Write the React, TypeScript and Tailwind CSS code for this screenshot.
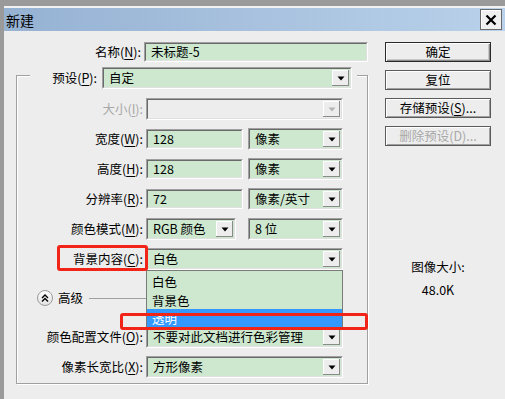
const font = "font-['Noto_Sans_CJK_SC',sans-serif]";

function Arrow({ disabled }: { disabled?: boolean }) {
  return (
    <div className="w-[17px] my-[1px] mr-[1px] flex items-center justify-center bg-[#ededed] shadow-[inset_-1px_-1px_0_#8a8a8a,inset_1px_1px_0_#ffffff]">
      <svg width="8" height="5" viewBox="0 0 8 5">
        <path d="M0.5 0.5h7L4 4.5z" fill={disabled ? "#b4b4b4" : "#000"} />
      </svg>
    </div>
  );
}

function Sunken({ className = "", children }: { className?: string; children: React.ReactNode }) {
  return (
    <div className={`border border-[#a0a0a0] border-r-white border-b-white ${className}`}>
      <div className="h-full flex border border-[#6a6a6a] border-r-[#e0e0e0] border-b-[#e0e0e0]">{children}</div>
    </div>
  );
}

function Combo({ value, className = "", disabled }: { value?: string; className?: string; disabled?: boolean }) {
  return (
    <Sunken className={`h-[22px] ${className}`}>
      <div className={`flex-1 flex ${disabled ? "bg-[#ededed]" : "bg-[#cde8cf]"}`}>
        <span className="flex-1 pl-[5px] text-[12.5px] leading-[18px] whitespace-nowrap">{value}</span>
        <Arrow disabled={disabled} />
      </div>
    </Sunken>
  );
}

function TextBox({ value, className = "" }: { value: string; className?: string }) {
  return (
    <Sunken className={`h-[20px] ${className}`}>
      <span className="flex-1 bg-[#cde8cf] pl-[5px] text-[12.5px] leading-[16px]">{value}</span>
    </Sunken>
  );
}

function Row({ label, children, disabled, h = "h-[30px]" }: { label: React.ReactNode; children: React.ReactNode; disabled?: boolean; h?: string }) {
  return (
    <div className={`${h} flex items-center`}>
      <div className={`w-[126px] text-right text-[12.5px] whitespace-nowrap ${disabled ? "text-[#a8a8a8]" : ""}`}>{label}</div>
      <div className="ml-[3px] flex items-center">{children}</div>
    </div>
  );
}

function Btn({ children, primary, disabled }: { children: React.ReactNode; primary?: boolean; disabled?: boolean }) {
  return (
    <div
      className={`h-[20px] flex items-center justify-center text-[12.5px] border bg-[#ededed] ${
        primary ? "border-[#2a2a2a] shadow-[inset_1px_1px_0_#ffffff,inset_-1px_-1px_0_#8a8a8a,inset_-2px_-2px_0_#c8c8c8]" : "border-[#5a5a5a] shadow-[inset_1px_1px_0_#ffffff,inset_-1px_-1px_0_#a0a0a0]"
      } ${disabled ? "text-[#a8a8a8]" : ""}`}
    >
      {children}
    </div>
  );
}

export default function App() {
  return (
    <div className={`relative w-[505px] h-[399px] overflow-hidden bg-[#9a9a9a] ${font} text-black`}>
      <div className="ml-[4px] mt-[6px] h-[393px] flex flex-col border-t-2 border-[#f2f2f2]">
        {/* TITLE BAR */}
        <div className="h-[23px] flex items-center justify-between bg-gradient-to-r from-[#96b2d3] to-[#b9d1ea]">
          <span className="pl-[2px] text-[14px] leading-none">新建</span>
          <div className="mr-[3px] w-[22px] h-[21px] flex items-center justify-center bg-[#f0f0f0] border border-[#6a6a6a] shadow-[inset_1px_1px_0_#ffffff]">
            <svg width="12" height="12" viewBox="0 0 12 12">
              <path d="M1.5 1.5l9 9M10.5 1.5l-9 9" stroke="#000" strokeWidth="2.2" />
            </svg>
          </div>
        </div>

        {/* BODY */}
        <div className="flex-1 flex bg-[#ededed]">
          {/* LEFT FORM */}
          <div className="w-[364px] shrink-0">
            <div className="mt-[11px] h-[20px] flex items-center">
              <div className="w-[139px] text-right text-[12.5px]">
                名称(<u className="underline-offset-2">N</u>):
              </div>
              <TextBox value="未标题-5" className="ml-[3px] w-[224px] shrink-0" />
            </div>

            {/* PRESET GROUP */}
            <div className="mt-[13px] ml-[12px] w-[352px] h-[309px] border border-[#a0a0a0] shadow-[1px_1px_0_#ffffff,inset_1px_1px_0_#ffffff]">
              <div className="mt-[-9px] ml-[13px] w-[327px] h-[22px] flex items-center bg-[#ededed]">
                <div className="w-[67px] text-right text-[12.5px]">
                  预设(<u className="underline-offset-2">P</u>):
                </div>
                <Combo value="自定" className="ml-[5px] w-[250px]" />
              </div>

              <div className="mt-[5px]">
                <Row label={<>大小(<u className="underline-offset-2">I</u>):</>} disabled>
                  <Combo disabled className="w-[197px]" />
                </Row>
                <Row label={<>宽度(<u className="underline-offset-2">W</u>):</>}>
                  <TextBox value="128" className="w-[97px]" />
                  <Combo value="像素" className="ml-[5px] w-[95px]" />
                </Row>
                <Row label={<>高度(<u className="underline-offset-2">H</u>):</>}>
                  <TextBox value="128" className="w-[97px]" />
                  <Combo value="像素" className="ml-[5px] w-[95px]" />
                </Row>
                <Row label={<>分辨率(<u className="underline-offset-2">R</u>):</>}>
                  <TextBox value="72" className="w-[97px]" />
                  <Combo value="像素/英寸" className="ml-[5px] w-[95px]" />
                </Row>
                <Row label={<>颜色模式(<u className="underline-offset-2">M</u>):</>}>
                  <Combo value="RGB 颜色" className="w-[90px]" />
                  <Combo value="8 位" className="ml-[12px] w-[95px]" />
                </Row>
                <Row label={<>背景内容(<u className="underline-offset-2">C</u>):</>}>
                  <div className="relative w-[197px]">
                    <Combo value="白色" className="w-[197px]" />
                    {/* OPEN DROPDOWN LIST */}
                    <div className="absolute left-0 top-full z-10 w-[197px] border border-[#7a7a7a] bg-[#cde8cf] text-[12.5px]">
                      <div className="h-[19px] pl-[5px] leading-[21px]">白色</div>
                      <div className="h-[19px] pl-[5px] leading-[21px]">背景色</div>
                      <div className="h-[19px] pl-[5px] leading-[19px] bg-[#3399ff] text-white">透明</div>
                    </div>
                  </div>
                </Row>

                {/* ADVANCED */}
                <div className="h-[48px] flex items-center">
                  <div className="ml-[20px] w-[16px] h-[16px] rounded-full border border-[#9a9a9a] bg-gradient-to-b from-white to-[#e2e2e2] flex items-center justify-center">
                    <svg width="8" height="8" viewBox="0 0 8 8">
                      <path d="M1 4l3-3 3 3M1 7.5l3-3 3 3" stroke="#000" strokeWidth="1.4" fill="none" />
                    </svg>
                  </div>
                  <span className="ml-[5px] text-[12.5px]">高级</span>
                  <div className="ml-[6px] mr-[24px] flex-1 h-px bg-[#a0a0a0]" />
                </div>

                <Row label={<>颜色配置文件(<u className="underline-offset-2">O</u>):</>}>
                  <Combo value="不要对此文档进行色彩管理" className="w-[197px]" />
                </Row>
                <Row label={<>像素长宽比(<u className="underline-offset-2">X</u>):</>}>
                  <Combo value="方形像素" className="w-[197px]" />
                </Row>
              </div>
            </div>
          </div>

          {/* RIGHT BUTTONS */}
          <div className="ml-[17px] w-[106px] shrink-0">
            <div className="mt-[11px] flex flex-col gap-[8px]">
              <Btn primary>确定</Btn>
              <Btn>复位</Btn>
              <Btn>
                存储预设(<u className="underline-offset-2">S</u>)...
              </Btn>
              <Btn disabled>删除预设(D)...</Btn>
            </div>
            <div className="mt-[113px] text-center text-[12.5px] leading-[16px]">图像大小:</div>
            <div className="mt-[7px] text-center text-[12.5px] leading-[16px]">48.0K</div>
          </div>
        </div>
      </div>

      {/* RED ANNOTATIONS */}
      <div className="absolute left-[57px] top-[245px] w-[91px] h-[26px] border-[3px] border-[#f22418] rounded-[3px] z-20" />
      <div className="absolute left-[120px] top-[313px] w-[248px] h-[17px] border-[3px] border-[#f22418] rounded-[3px] z-20" />
    </div>
  );
}
